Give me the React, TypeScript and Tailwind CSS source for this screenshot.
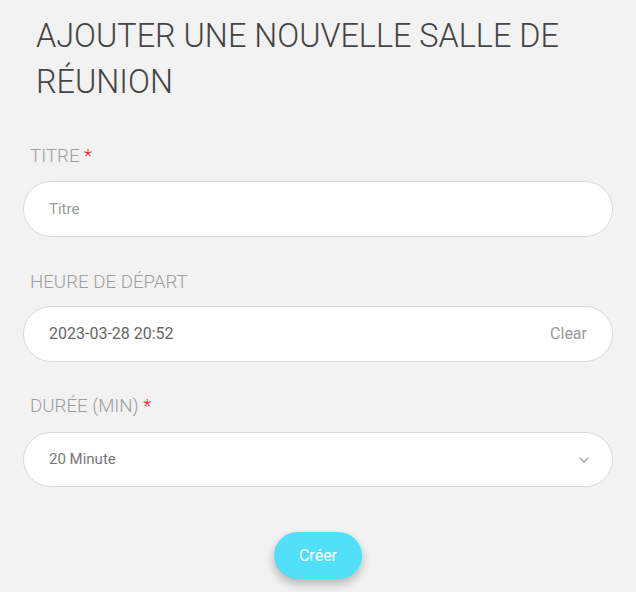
import React from "react";

export default function App() {
  return (
    <div className="min-h-[592px] bg-[#f2f2f2] font-['Roboto',sans-serif]">
      <div className="pl-[23px] pr-[23px]">
        <h1 className="pl-[13px] pt-[13px] text-[32.4px] leading-[46px] font-light text-[#444444]">
          AJOUTER UNE NOUVELLE SALLE DE RÉUNION
        </h1>

        <div className="mt-[39px] flex flex-col">
          <label className="pl-[7px] text-[18.7px] leading-[24px] font-light text-[#9e9e9e]">
            TITRE <span className="text-[#f5222d]">*</span>
          </label>
          <div className="mt-[13px] flex h-[56px] items-center rounded-full border border-[#d9d9d9] bg-white px-[25px]">
            <input
              placeholder="Titre"
              className="w-full bg-transparent text-[15px] text-[#555] placeholder:text-[#999] outline-none"
            />
          </div>

          <label className="mt-[33px] pl-[7px] text-[18.7px] leading-[24px] font-light text-[#9e9e9e]">
            HEURE DE DÉPART
          </label>
          <div className="mt-[12px] flex h-[56px] items-center justify-between rounded-full border border-[#d9d9d9] bg-white px-[25px]">
            <span className="text-[16px] text-[#666666]">2023-03-28 20:52</span>
            <span className="text-[16px] text-[#999999]">Clear</span>
          </div>

          <label className="mt-[32px] pl-[7px] text-[18.7px] leading-[24px] font-light text-[#9e9e9e]">
            DURÉE (MIN) <span className="text-[#f5222d]">*</span>
          </label>
          <div className="mt-[14px] flex h-[55px] items-center justify-between rounded-full border border-[#d9d9d9] bg-white pl-[25px] pr-[23px]">
            <span className="text-[15px] text-[#777777]">20 Minute</span>
            <svg width="10" height="6" viewBox="0 0 10 6" fill="none">
              <path d="M1 1l4 4 4-4" stroke="#9a9a9a" strokeWidth="1.2" strokeLinecap="round" strokeLinejoin="round" />
            </svg>
          </div>

          <div className="mt-[45px] flex justify-center">
            <button className="h-[47px] w-[88px] rounded-full bg-[#52dff8] text-[16px] text-white shadow-[0_5px_10px_rgba(0,0,0,0.25)]">
              Créer
            </button>
          </div>
        </div>
      </div>
    </div>
  );
}
